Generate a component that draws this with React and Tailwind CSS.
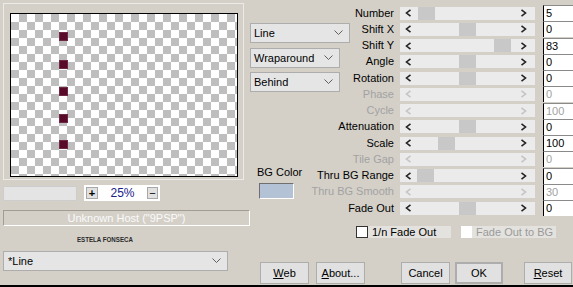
import React from "react";

const Chevron = () => (
  <svg width="9" height="6" viewBox="0 0 9 6">
    <polyline points="0.5,0.5 4.5,4.5 8.5,0.5" fill="none" stroke="#606060" strokeWidth="1" />
  </svg>
);

const Arrow = ({ dir, disabled }) => (
  <svg width="7" height="8" viewBox="0 0 7 8">
    <polyline
      points={dir === "l" ? "5.5,0.8 1.5,4 5.5,7.2" : "1.5,0.8 5.5,4 1.5,7.2"}
      fill="none"
      stroke={disabled ? "#c4c4c4" : "#222"}
      strokeWidth="1.6"
    />
  </svg>
);

const Dropdown = ({ label, className }) => (
  <div className={"h-[20px] bg-[#e5e5e5] border border-[#adadad] flex items-center justify-between pl-[3px] pr-[6px] " + className}>
    <span>{label}</span>
    <Chevron />
  </div>
);

const rows = [
  { label: "Number", thumb: 18, val: "5" },
  { label: "Shift X", thumb: 59, val: "0" },
  { label: "Shift Y", thumb: 94, val: "83" },
  { label: "Angle", thumb: 59, val: "0" },
  { label: "Rotation", thumb: 59, val: "0" },
  { label: "Phase", disabled: true, val: "0" },
  { label: "Cycle", disabled: true, val: "100" },
  { label: "Attenuation", thumb: 59, val: "0" },
  { label: "Scale", thumb: 38, val: "100" },
  { label: "Tile Gap", disabled: true, val: "0" },
  { label: "Thru BG Range", thumb: 17, val: "0" },
  { label: "Thru BG Smooth", disabled: true, val: "30" },
  { label: "Fade Out", thumb: 59, val: "0" },
];

const dots = [18, 46, 73, 100, 126];

const Btn = ({ children, className = "" }) => (
  <div className={"h-[22px] bg-[#e1e1e1] border border-[#adadad] flex items-center justify-center " + className}>
    {children}
  </div>
);

export default function App() {
  return (
    <div className="w-[573px] h-[287px] bg-[#d4d0c8] border-b-2 border-black flex text-[11px] leading-[13px] text-black overflow-hidden font-['Liberation_Sans',Arial,sans-serif]">
      {/* Left column */}
      <div className="w-[250px] shrink-0 flex flex-col">
        <div className="ml-[3px] mt-[3px] w-[241px] h-[177px] border border-[#ecebe7] pl-[6px] pt-[9px]">
          <div className="relative w-[228px] h-[164px] border border-black bg-[image:conic-gradient(#bebebe_25%,#ffffff_0_50%,#bebebe_0_75%,#ffffff_0)] bg-[length:16px_16px]">
            {dots.map((t) => (
              <div key={t} className="absolute left-[48px] w-[9px] h-[9px] bg-[#580a28] border border-[#6e2a44]" style={{ top: t }} />
            ))}
          </div>
        </div>
        <div className="mt-[5px] h-[16px] pl-[3px] flex items-center">
          <div className="w-[74px] h-[15px] bg-[#e4e4e4] border border-[#cdcdcd]" />
          <div className="ml-[7px] w-[76px] h-[16px] bg-white flex items-center px-[2px]">
            <div className="w-[12px] h-[12px] bg-[#e1e1e1] border border-[#a8a8a8] flex items-center justify-center font-bold text-[11px] leading-none">+</div>
            <div className="flex-1 text-center text-[#1b1b8a] text-[12px]">25%</div>
            <div className="w-[11px] h-[12px] bg-[#e1e1e1] border border-[#a8a8a8] flex items-center justify-center text-[11px] leading-none">−</div>
          </div>
        </div>
        <div className="mt-[9px] ml-[3px] w-[247px] h-[16px] border-t border-l border-[#a19d95] border-b border-r border-b-white border-r-white flex items-center justify-center text-[#fafafa]">
          Unknown Host ("9PSP")
        </div>
        <div className="mt-[10px] ml-[77px] w-fit text-[8px] leading-[8px] font-bold text-[#2a2a2a] scale-x-[0.77] origin-left whitespace-nowrap">
          ESTELA FONSECA
        </div>
        <Dropdown label="*Line" className="mt-[7px] ml-[3px] w-[225px] pl-[4px] pr-[5px]" />
      </div>

      {/* Right area */}
      <div className="w-[323px] flex flex-col">
        <div className="flex">
          <div className="w-[100px] shrink-0 flex flex-col pt-[23px]">
            <Dropdown label="Line" className="w-[100px]" />
            <Dropdown label="Wraparound" className="mt-[5px] w-[90px]" />
            <Dropdown label="Behind" className="mt-[4px] w-[90px]" />
            <div className="mt-[74px] ml-[7px]">BG Color</div>
            <div className="mt-[4px] ml-[9px] w-[35px] h-[16px] border-t border-l border-[#6f6f6f] border-b border-r border-b-white border-r-white bg-[#b3c3d5]" />
          </div>
          <div className="w-[223px] flex flex-col pt-[5px]">
            {rows.map((r) => (
              <div key={r.label} className="h-[16.25px] flex items-center">
                <div className={"w-[44px] flex justify-end whitespace-nowrap " + (r.disabled ? "text-[#a2a2a2]" : "text-black")}>
                  {r.label}
                </div>
                <div className="ml-[6px] w-[135px] h-[13px] bg-[#ebebeb] relative flex items-center justify-between pl-[5px] pr-[8px]">
                  <Arrow dir="l" disabled={r.disabled} />
                  {!r.disabled && (
                    <div className="absolute top-0 w-[17px] h-[13px] bg-[#c8c8c8]" style={{ left: r.thumb }} />
                  )}
                  <Arrow dir="r" disabled={r.disabled} />
                </div>
                <div className={"ml-[8px] w-[30px] h-[16px] bg-white border-l border-l-black border-t border-t-[#8a8a8a] pl-[2px] flex items-center " + (r.disabled ? "text-[#a2a2a2]" : "text-black")}>
                  {r.val}
                </div>
              </div>
            ))}
          </div>
        </div>

        <div className="mt-[10px] pl-[106px] flex items-center h-[12px]">
          <div className="w-[12px] h-[12px] bg-white border border-[#333]" />
          <div className="w-[83px] h-[12px] bg-[#e4e2de] pl-[4px] flex items-center">1/n Fade Out</div>
          <div className="ml-[10px] w-[11px] h-[12px] bg-white" />
          <div className="w-[84px] h-[12px] bg-[#e4e2de] pl-[4px] flex items-center text-[#9a9a9a]">Fade Out to BG</div>
        </div>

        <div className="mt-[24px] pl-[10px] flex">
          <Btn className="w-[49px]"><span className="underline">W</span>eb</Btn>
          <Btn className="ml-[7px] w-[49px]"><span className="underline">A</span>bout...</Btn>
          <Btn className="ml-[36px] w-[49px]">Cancel</Btn>
          <Btn className="ml-[5px] w-[48px] border-2 border-[#0078d7]">OK</Btn>
          <Btn className="ml-[21px] w-[48px]"><span className="underline">R</span>eset</Btn>
        </div>
      </div>
    </div>
  );
}
